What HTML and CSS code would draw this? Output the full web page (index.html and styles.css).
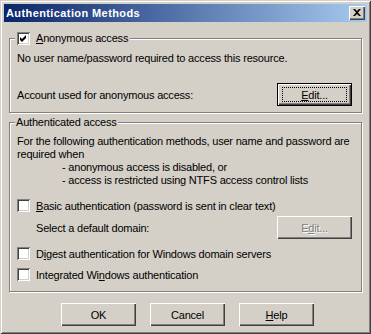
FILE: index.html
```html
<!DOCTYPE html>
<html>
<head>
<meta charset="utf-8">
<link rel="stylesheet" href="styles.css">
</head>
<body>
<div class="window">
  <div class="titlebar">
    <span class="title">Authentication Methods</span>
    <span class="close"><svg width="8" height="7" viewBox="0 0 8 7"><path d="M0 0h2l2 2 2-2h2L5 3.5 8 7H6L4 5 2 7H0l3-3.5z" fill="#000"/></svg></span>
  </div>
  <div class="content">
    <fieldset class="group group-anon">
      <legend class="legend">
        <span class="check"><svg width="9" height="9" viewBox="0 0 9 9"><path d="M1 3 L3 5 L7 1 L7 4 L3 8 L1 6 Z" fill="#000"/></svg></span>
        <span class="label"><u>A</u>nonymous access</span>
      </legend>
      <p class="text first">No user name/password required to access this resource.</p>
      <div class="row-btn">
        <span>Account used for anonymous access:</span>
        <span class="btn default"><span class="focus"><u>E</u>dit...</span></span>
      </div>
    </fieldset>
    <fieldset class="group group-auth">
      <legend class="legend text-legend">Authenticated access</legend>
      <p class="text first">For the following authentication methods, user name and password are required when</p>
      <p class="text indent">- anonymous access is disabled, or</p>
      <p class="text indent">- access is restricted using NTFS access control lists</p>
      <div class="opt opt-basic"><span class="check"></span><span class="label"><u>B</u>asic authentication (password is sent in clear text)</span></div>
      <div class="row-btn sub">
        <span>Select a default domain:</span>
        <span class="btn disabled"><span class="dtext">E<u>d</u>it...</span></span>
      </div>
      <div class="opt opt-digest"><span class="check"></span><span class="label">D<u>i</u>gest authentication for Windows domain servers</span></div>
      <div class="opt opt-int"><span class="check"></span><span class="label">Integrated Wi<u>n</u>dows authentication</span></div>
    </fieldset>
    <div class="buttons">
      <span class="btn">OK</span>
      <span class="btn">Cancel</span>
      <span class="btn"><u>H</u>elp</span>
    </div>
  </div>
</div>
</body>
</html>
```
FILE: styles.css
```css
html, body {
  margin: 0;
  padding: 0;
}
body {
  font-family: "Liberation Sans", Arial, sans-serif;
  font-size: 11px;
  letter-spacing: -0.2px;
  color: #000;
  background: #d4d0c8;
}
.window {
  width: 371px;
  height: 334px;
  box-sizing: border-box;
  padding: 4px;
  background: #d4d0c8;
  box-shadow: inset 1px 1px #d4d0c8, inset -1px -1px #404040, inset 2px 2px #fff, inset -2px -2px #808080;
  display: flex;
  flex-direction: column;
}
.titlebar {
  height: 18px;
  background: linear-gradient(to right, #0a246a, #a6caf0);
  display: flex;
  align-items: center;
  justify-content: space-between;
  padding: 0 2px 0 2px;
}
.title {
  color: #fff;
  font-weight: bold;
  font-size: 11px;
  letter-spacing: 0.4px;
}
.close {
  width: 16px;
  height: 14px;
  box-sizing: border-box;
  background: #d4d0c8;
  box-shadow: inset 1px 1px #fff, inset -1px -1px #404040, inset -2px -2px #808080;
  display: flex;
  align-items: center;
  justify-content: center;
  padding: 0 0 1px 0;
}
.close svg { display: block; }
.content {
  flex: 1;
  padding: 0 5px;
  display: flex;
  flex-direction: column;
}
.group {
  margin: 0;
  border: 1px solid #808080;
  box-shadow: inset 1px 1px #fff, 1px 1px #fff;
  padding: 0 9px 6px 7px;
  min-width: 0;
}
.group-anon { margin-top: 9px; }
.group-auth { margin-top: 2px; padding-bottom: 10px; }
.legend {
  margin-left: -2px;
  padding: 0 2px;
  height: 14px;
  background: #d4d0c8;
  display: flex;
  align-items: center;
  gap: 6px;
  line-height: 14px;
}
.text-legend { display: block; padding: 0 1px 0 1px; }
.check {
  width: 13px;
  height: 13px;
  box-sizing: border-box;
  background: #fff;
  box-shadow: inset 1px 1px #808080, inset -1px -1px #fff, inset 2px 2px #404040, inset -2px -2px #d4d0c8;
  display: flex;
  align-items: center;
  justify-content: center;
  flex: none;
}
.check svg { display: block; }
.text {
  margin: 0;
  line-height: 13px;
}
.group-anon .first { margin-top: 7px; }
.group-auth .first { margin-top: 6px; }
.indent { padding-left: 45px; }
.row-btn {
  display: flex;
  align-items: center;
  justify-content: space-between;
}
.group-anon .row-btn { margin-top: 18px; }
.row-btn.sub { margin-top: 4px; padding-left: 19px; }
.btn {
  width: 75px;
  height: 23px;
  box-sizing: border-box;
  background: #d4d0c8;
  box-shadow: inset 1px 1px #fff, inset -1px -1px #404040, inset -2px -2px #808080;
  display: flex;
  align-items: center;
  justify-content: center;
  flex: none;
}
.btn.default {
  box-shadow: inset 0 0 0 1px #000, inset 2px 2px #fff, inset -2px -2px #404040, inset -3px -3px #808080;
}
.focus {
  width: 63px;
  height: 13px;
  outline: 1px dotted #000;
  display: flex;
  align-items: center;
  justify-content: center;
}
.dtext {
  color: #808080;
  text-shadow: 1px 1px #fff;
}
.opt {
  display: flex;
  align-items: center;
  gap: 6px;
  height: 13px;
}
.opt-basic { margin-top: 12px; }
.opt-digest { margin-top: 8px; }
.opt-int { margin-top: 8px; }
.buttons {
  margin-top: 11px;
  display: flex;
  justify-content: flex-end;
  gap: 14px;
  padding-right: 48px;
}
```
